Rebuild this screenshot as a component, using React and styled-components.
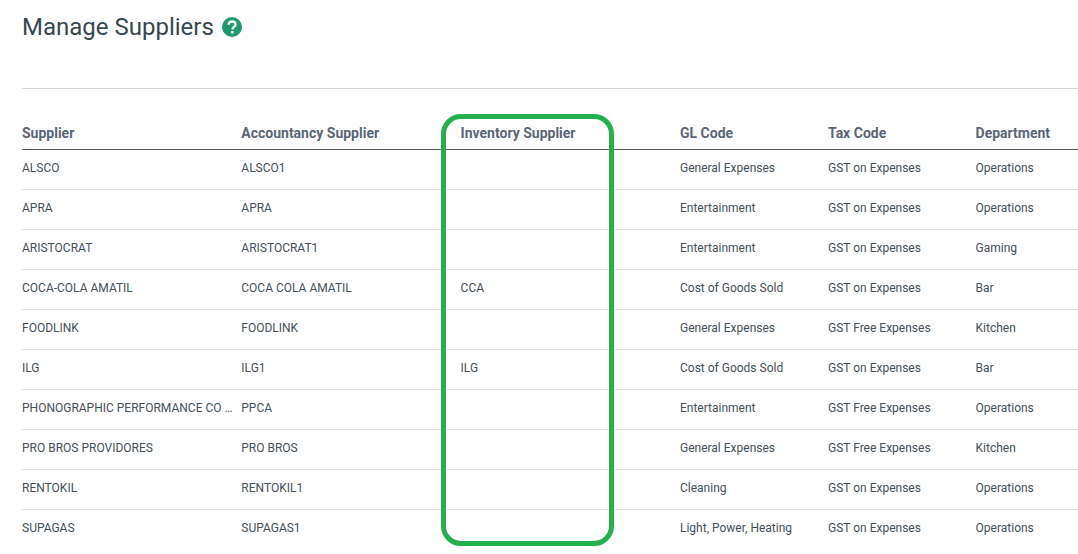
import React from 'react';
import styled, { createGlobalStyle } from 'styled-components';

const rows = [
  ['ALSCO', 'ALSCO1', '', 'General Expenses', 'GST on Expenses', 'Operations'],
  ['APRA', 'APRA', '', 'Entertainment', 'GST on Expenses', 'Operations'],
  ['ARISTOCRAT', 'ARISTOCRAT1', '', 'Entertainment', 'GST on Expenses', 'Gaming'],
  ['COCA-COLA AMATIL', 'COCA COLA AMATIL', 'CCA', 'Cost of Goods Sold', 'GST on Expenses', 'Bar'],
  ['FOODLINK', 'FOODLINK', '', 'General Expenses', 'GST Free Expenses', 'Kitchen'],
  ['ILG', 'ILG1', 'ILG', 'Cost of Goods Sold', 'GST on Expenses', 'Bar'],
  ['PHONOGRAPHIC PERFORMANCE CO \u2026', 'PPCA', '', 'Entertainment', 'GST Free Expenses', 'Operations'],
  ['PRO BROS PROVIDORES', 'PRO BROS', '', 'General Expenses', 'GST Free Expenses', 'Kitchen'],
  ['RENTOKIL', 'RENTOKIL1', '', 'Cleaning', 'GST on Expenses', 'Operations'],
  ['SUPAGAS', 'SUPAGAS1', '', 'Light, Power, Heating', 'GST on Expenses', 'Operations'],
];

const headings = ['Supplier', 'Accountancy Supplier', 'Inventory Supplier', 'GL Code', 'Tax Code', 'Department'];

const GlobalStyle = createGlobalStyle`
  html, body {
    margin: 0;
    background: #fff;
    font-family: Roboto, "Liberation Sans", sans-serif;
    overflow: hidden;
  }
`;

const Page = styled.div`
  position: relative;
  height: 554px;
  padding-left: 22px;
  overflow: hidden;
`;

const TitleBar = styled.div`
  display: flex;
  align-items: center;
  gap: 8px;
  height: 89px;
  padding-bottom: 35px;
  box-sizing: border-box;
  border-bottom: 1px solid #cfd8dc;
`;

const Title = styled.h1`
  margin: 0;
  font-size: 24px;
  font-weight: 400;
  color: #37474f;
`;

const HelpIcon = styled.svg`
  width: 20px;
  height: 20px;
`;

const Table = styled.div`
  width: 1056px;
`;

const Row = styled.div`
  display: grid;
  grid-template-columns: 219.3px 219.3px 219.4px 148px 147.6px 102.4px;
  align-items: center;
  height: 40px;
  border-bottom: 1px solid #e2e2e2;
  box-sizing: border-box;
  &:last-child {
    border-bottom-color: transparent;
  }
`;

const HeadRow = styled(Row)`
  align-items: end;
  height: 61px;
  padding-bottom: 8px;
  border-bottom-color: #4d5862;
`;

const HeadCell = styled.div`
  font-size: 14px;
  font-weight: 700;
  line-height: 16px;
  color: #5a6675;
`;

const Cell = styled.div`
  padding: 0 8px 3px 0;
  font-size: 12px;
  line-height: 14px;
  color: #455059;
  white-space: nowrap;
  overflow: hidden;
  text-overflow: ellipsis;
`;

const Highlight = styled.div`
  position: absolute;
  left: 441px;
  top: 114px;
  width: 173px;
  height: 432px;
  box-sizing: border-box;
  border: 5px solid #22b14c;
  border-radius: 20px;
  pointer-events: none;
`;

export default function App() {
  return (
    <Page>
      <GlobalStyle />
      <TitleBar>
        <Title>Manage Suppliers</Title>
        <HelpIcon viewBox="0 0 20 20">
          <circle cx="10" cy="10" r="10" fill="#1f9970" />
          <path
            d="M6.6 7.7C6.7 5.7 8.1 4.5 10.1 4.5c2 0 3.4 1.2 3.4 2.9 0 1.3-.7 2-1.6 2.6-.9.6-1.3 1-1.3 2v.4"
            fill="none"
            stroke="#fff"
            strokeWidth="2.3"
          />
          <rect x="9.2" y="14" width="2.4" height="2.4" rx=".5" fill="#fff" />
        </HelpIcon>
      </TitleBar>
      <Table>
        <HeadRow>
          {headings.map(h => <HeadCell key={h}>{h}</HeadCell>)}
        </HeadRow>
        {rows.map(row => (
          <Row key={row[0]}>
            {row.map((text, i) => <Cell key={i}>{text}</Cell>)}
          </Row>
        ))}
      </Table>
      <Highlight />
    </Page>
  );
}
